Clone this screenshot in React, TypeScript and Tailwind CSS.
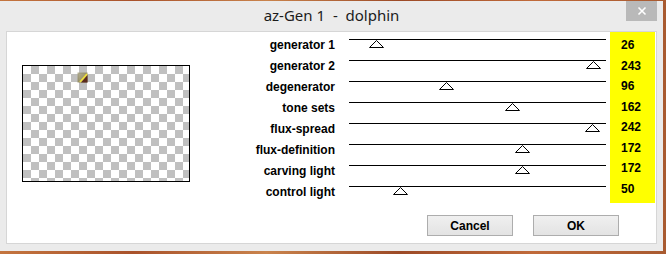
const sliders = [
  { label: 'generator 1', value: 26 },
  { label: 'generator 2', value: 243 },
  { label: 'degenerator', value: 96 },
  { label: 'tone sets', value: 162 },
  { label: 'flux-spread', value: 242 },
  { label: 'flux-definition', value: 172 },
  { label: 'carving light', value: 172 },
  { label: 'control light', value: 50 },
];

function Thumb({ value }: { value: number }) {
  // thumb centre sits at value + 1 from the track start
  return (
    <svg
      width="15"
      height="8"
      viewBox="0 0 15 8"
      className="absolute top-0"
      style={{ left: value + 1 - 7.5 }}
    >
      <polygon points="7.5,0.5 14.5,7.5 0.5,7.5" fill="#fff" stroke="#000" strokeWidth="1" />
    </svg>
  );
}

function PreviewIcon() {
  return (
    <svg width="11" height="11" viewBox="0 0 11 11" className="absolute left-[54px] top-[6px]">
      <defs>
        <linearGradient id="pv" x1="0" y1="0" x2="1" y2="1">
          <stop offset="0" stopColor="#a8a488" />
          <stop offset="0.5" stopColor="#8f8658" />
          <stop offset="1" stopColor="#6d6240" />
        </linearGradient>
      </defs>
      <rect x="0.5" y="0.5" width="10" height="10" fill="url(#pv)" opacity="0.85" />
      <polygon points="10.5,3 10.5,10.5 4,10.5" fill="#5b2a1c" />
      <line x1="3" y1="10" x2="10" y2="2" stroke="#f2e23a" strokeWidth="1.6" />
    </svg>
  );
}

export default function App() {
  const font = { fontFamily: '"Liberation Sans", Arial, sans-serif' };

  return (
    <div className="w-[666px] h-[254px] overflow-hidden bg-[linear-gradient(90deg,#c4753f,#a9522b_20%,#c9834c_40%,#9c4a27_60%,#c06a3a_80%,#a85a30)] pt-px">
      <div className="w-[663px] h-[250px] bg-[#ebebeb] flex flex-col">
        {/* title bar */}
        <div className="relative h-[30px] flex items-center justify-center">
          <span
            className="whitespace-pre text-[15px] text-[#1b1b1b] leading-none -mt-px"
            style={{ fontFamily: '"Noto Sans", "Open Sans", sans-serif' }}
          >
            az-Gen 1  -  dolphin
          </span>
          <div className="absolute right-[6px] top-0 w-[31px] h-[20px] bg-[#b9b9b9] flex items-center justify-center">
            <svg width="10" height="10" viewBox="0 0 10 10">
              <path d="M1.5 1.5 L8.5 8.5 M8.5 1.5 L1.5 8.5" stroke="#fff" strokeWidth="1.6" />
            </svg>
          </div>
        </div>

        {/* client */}
        <div className="ml-[6px] w-[651px] h-[213px] border border-[#d6d6d6] bg-white" style={font}>
          <div className="flex items-start">
            <div className="ml-[15px] mt-[33px] relative w-[168px] h-[117px] border border-black bg-[conic-gradient(#c0c0c0_25%,#fff_0_50%,#c0c0c0_0_75%,#fff_0)] bg-[length:16px_16px]">
              <PreviewIcon />
            </div>

            <div className="ml-[60px] w-[85px] pt-[7px] flex flex-col">
              {sliders.map((s) => (
                <div key={s.label} className="h-[21px] text-right text-[12px] font-bold leading-[12px] text-black">
                  {s.label}
                </div>
              ))}
            </div>

            <div className="ml-[14px] w-[257px] pt-[7px] flex flex-col">
              {sliders.map((s) => (
                <div key={s.label} className="relative h-[21px] border-t border-black">
                  <Thumb value={s.value} />
                </div>
              ))}
            </div>

            <div className="ml-[4px] w-[45px] h-[171px] bg-[#ffff00] pt-[7px] pl-[11px] flex flex-col">
              {sliders.map((s) => (
                <div key={s.label} className="h-[21px] text-[12px] font-bold leading-[12px] text-black">
                  {s.value}
                </div>
              ))}
            </div>
          </div>

          <div className="mt-[8px] flex justify-end gap-[20px] pr-[37px]">
            <button className="w-[86px] h-[21px] border border-[#adadad] bg-[linear-gradient(#f0f0f0,#e3e3e3)] text-[12px] font-bold text-black leading-none">
              Cancel
            </button>
            <button className="w-[86px] h-[21px] border border-[#adadad] bg-[linear-gradient(#f0f0f0,#e3e3e3)] text-[12px] font-bold text-black leading-none">
              OK
            </button>
          </div>
        </div>
      </div>
    </div>
  );
}
